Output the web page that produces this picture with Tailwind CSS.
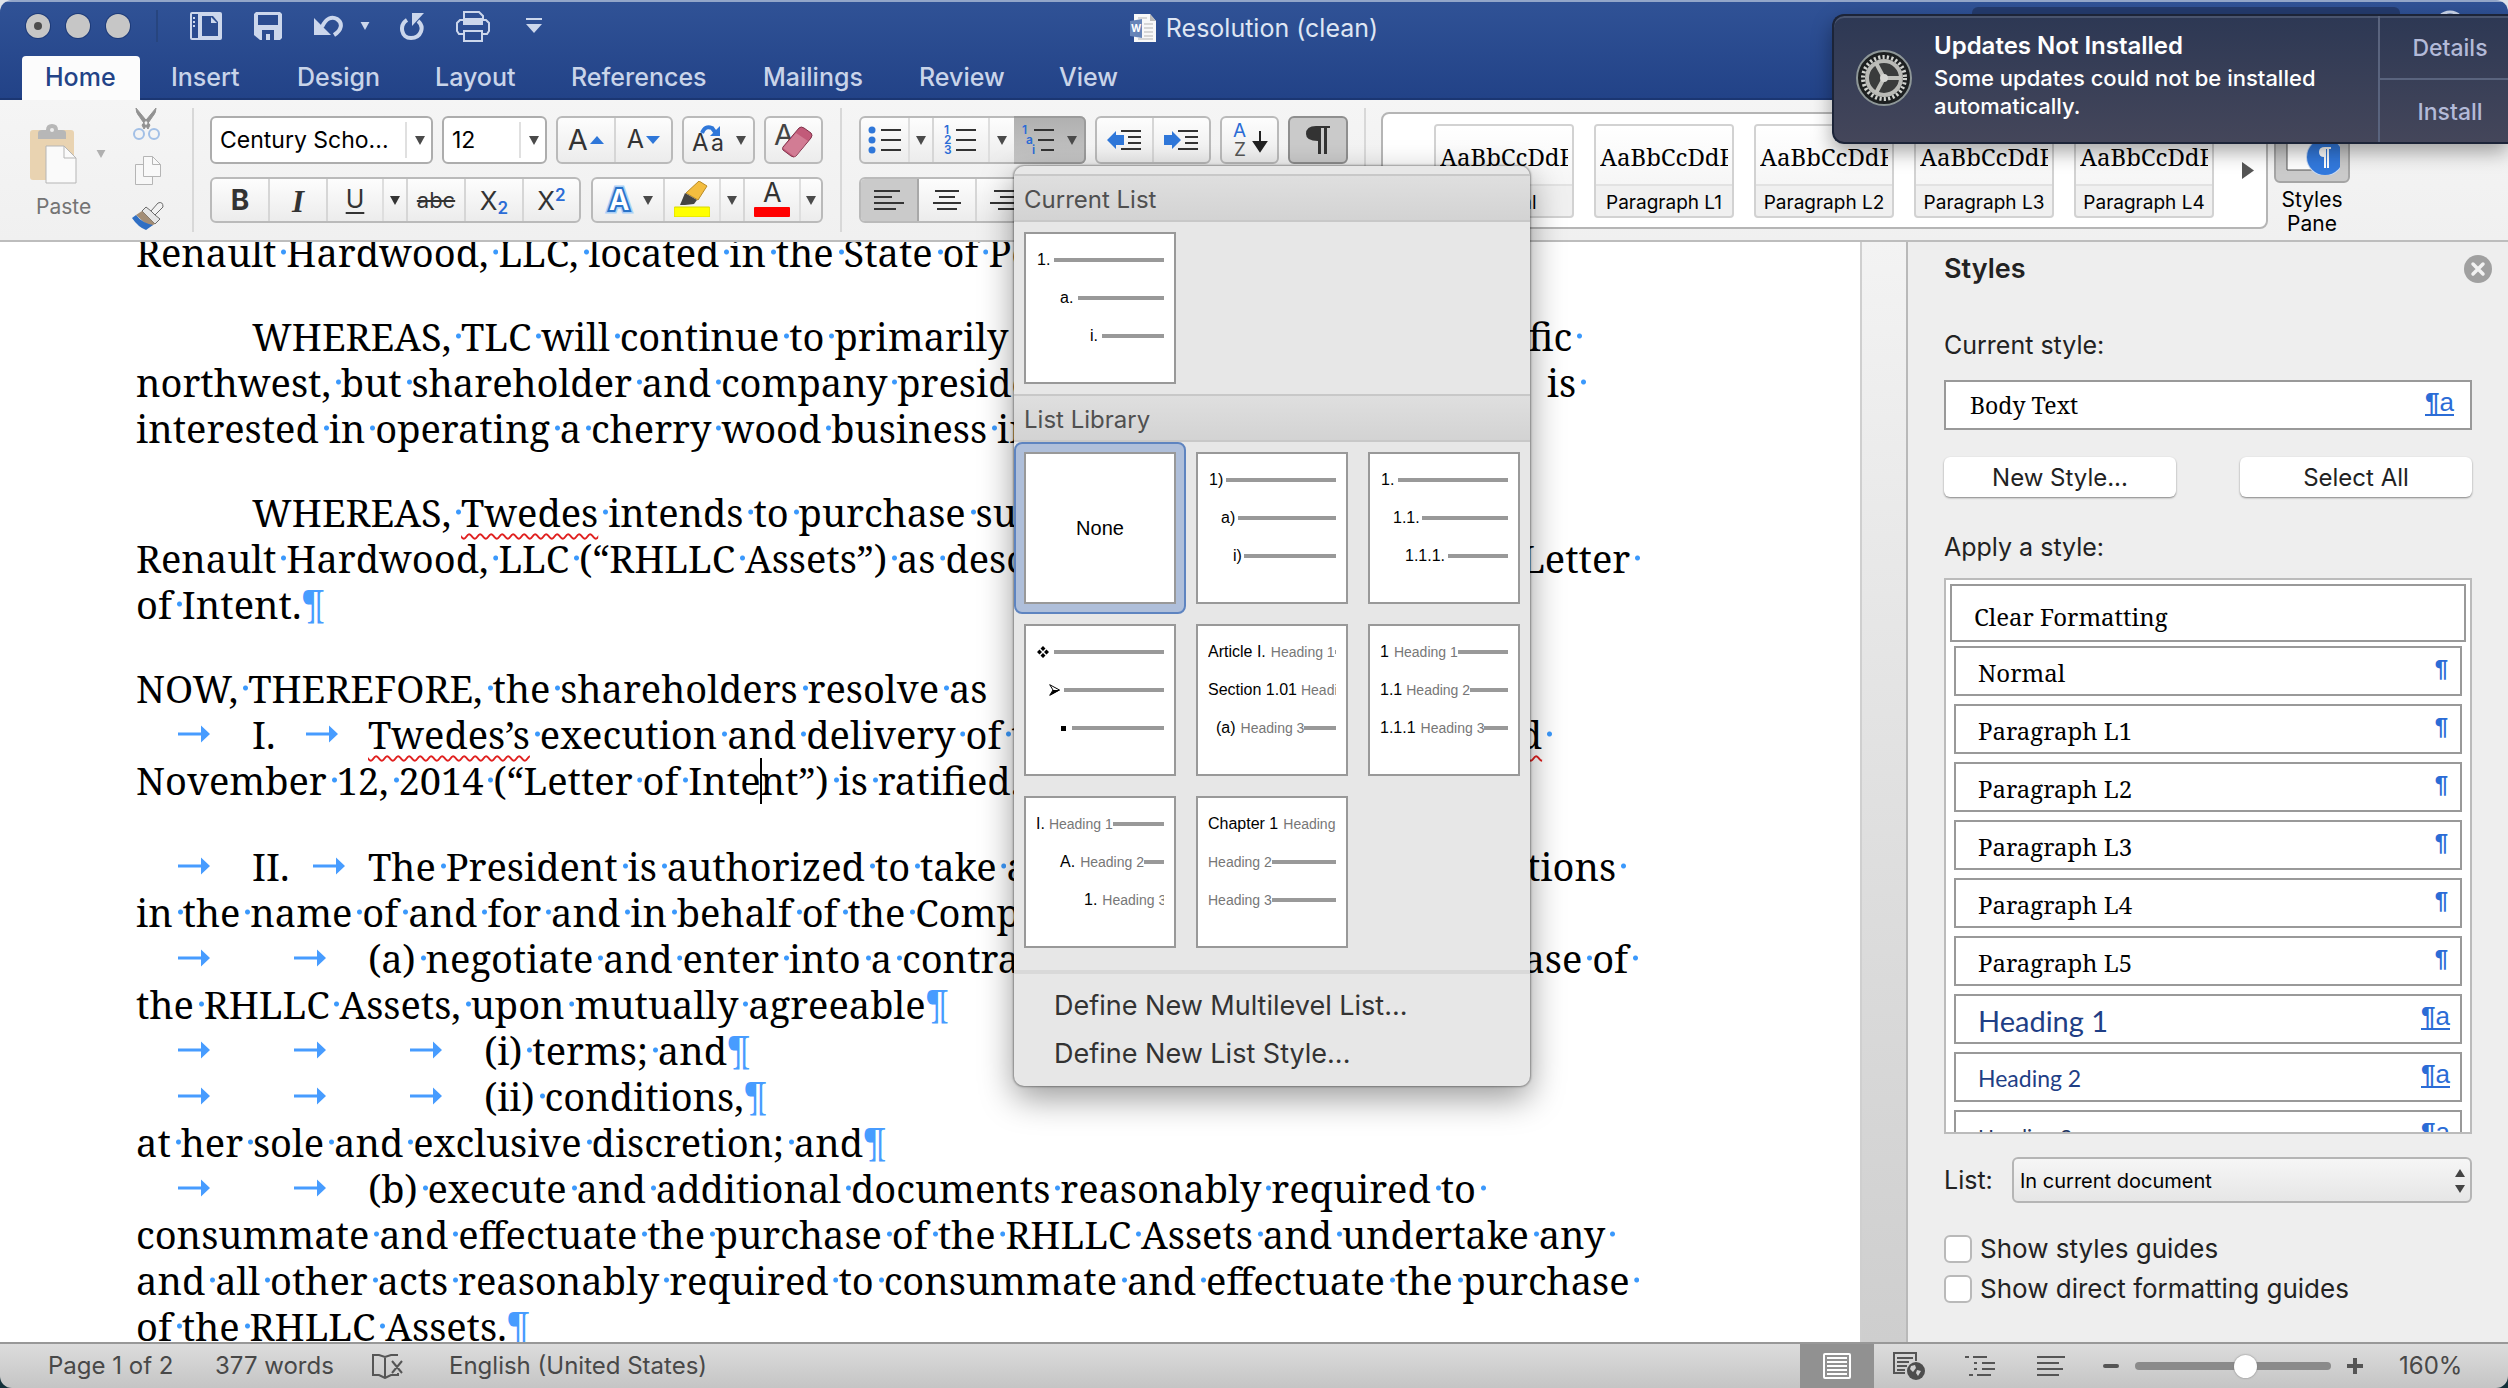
<!DOCTYPE html>
<html lang="en">
<head>
<meta charset="utf-8">
<title>Resolution (clean)</title>
<script src="https://cdn.jsdelivr.net/npm/@tailwindcss/browser@4"></script>
</head>
<body class="bg-linear-to-b from-[#dfe3ea] to-[#12303a] font-[Inter,'Liberation_Sans',sans-serif] text-black">
<svg class="hidden" aria-hidden="true">
  <symbol id="caret" viewBox="0 0 10 9"><path d="M0 0h10L5 9z" fill="currentColor"/></symbol>
  <symbol id="tab" viewBox="0 0 32 18"><path d="M0 7.500h23V0.500L32 9l-9 8.500v-7H0z" fill="#479cff"/></symbol>
</svg>
<div class="relative flex h-screen flex-col overflow-hidden rounded-[12px]">

<!-- Title bar and ribbon tabs -->
<header class="flex h-[100px] shrink-0 flex-col justify-between border-t-2 border-[#93a6c9] bg-linear-to-b from-[#305296] to-[#224287] shadow-[inset_0_-2px_0_#1b3672]">
  <div class="grid grid-cols-[1fr_auto_1fr] items-start">
    <div class="flex items-center pt-2 pl-[26px] text-[#ccd7ec]">
      <button aria-label="Close" class="mr-4 flex size-6 items-center justify-center rounded-full bg-[#c6c6c6] ring-1 ring-[#1d3a78]"><span class="size-2 rounded-full bg-[#4c4c4c]"></span></button>
      <button aria-label="Minimize" class="mr-4 size-6 rounded-full bg-[#c6c6c6] ring-1 ring-[#1d3a78]"></button>
      <button aria-label="Zoom" class="size-6 rounded-full bg-[#c6c6c6] ring-1 ring-[#1d3a78]"></button>
      <span class="ml-[26px] h-8 w-[2px] bg-[#27457f]"></span>
      <button aria-label="Templates" class="ml-8"><svg width="32" height="28" viewBox="0 0 32 28"><rect width="32" height="28" rx="2" fill="currentColor"/><rect x="2" y="2" width="6" height="24" fill="#2b4c90"/><path d="M3 5h2v2H3zM3 9h2v2H3zM3 13h2v2H3z" fill="#ccd7ec"/><path d="M12 4h11l5 6v14H12z" fill="#2b4c90"/><path d="M21 5v6h6z" fill="#ccd7ec"/></svg></button>
      <button aria-label="Save" class="ml-8"><svg width="28" height="28" viewBox="0 0 28 28"><path d="M2 0h24l2 2v24l-2 2H6l-6-5V2z" fill="currentColor"/><path d="M4 3h20v10H4zM8 18h12v10h-4v-6h-4v6H8z" fill="#2b4c90"/></svg></button>
      <button aria-label="Undo" class="ml-8"><svg width="30" height="22" viewBox="0 0 30 22"><path d="M0 3v17h17z" fill="currentColor"/><path d="M8 12c4-9 10-11 15-8 6 4 5 11-3 16" fill="none" stroke="currentColor" stroke-width="4"/></svg></button>
      <button aria-label="Undo options" class="ml-4"><svg width="10" height="8"><use href="#caret"/></svg></button>
      <button aria-label="Repeat" class="ml-[30px]"><svg width="24" height="28" viewBox="0 0 24 28"><path d="M7 8C-1 13 1 26 11 26c10 0 14-11 7-17" fill="none" stroke="currentColor" stroke-width="4"/><path d="M12 1h12L12 14z" fill="currentColor"/></svg></button>
      <button aria-label="Print" class="ml-8"><svg width="34" height="32" viewBox="0 0 34 32"><path d="M8 10V2h15l4 4v4M7 24H3l-2-3v-8l3-3h26l3 3v8l-2 3h-4" fill="none" stroke="currentColor" stroke-width="2"/><path d="M7 8h20v7H7z" fill="currentColor"/><path d="M8 21h18v10H8z" fill="none" stroke="currentColor" stroke-width="2"/></svg></button>
      <button aria-label="Customize toolbar" class="ml-9"><svg width="16" height="16" viewBox="0 0 16 16"><path d="M0 0h16v2H0zM0 6h16l-8 9z" fill="currentColor"/></svg></button>
    </div>
    <h1 class="flex items-center gap-[10px] pt-[9px] text-[25px] leading-[34px] text-[#dfe6f3]">
      <svg width="26" height="28" viewBox="0 0 26 28"><path d="M4 0h16l6 7v21H4z" fill="#f8f8f8"/><path d="M20 0v7h6z" fill="#bbb"/><path d="M8 4h9M14 10h9M14 14h9M14 18h9M14 22h9M8 25h15" stroke="#b5b5b5"/><path d="M0 7l12-2v19L0 22z" fill="#6684b8"/><text x="1" y="18" font-size="10" font-weight="700" fill="#fff">W</text></svg>
      Resolution (clean)
    </h1>
    <div class="flex items-start justify-end gap-[34px] pt-[5px] pr-[42px]">
      <label class="block w-[428px]"><input aria-label="Search" type="search" class="h-10 w-full rounded-[6px] bg-[#243b6d]"></label>
      <svg class="mt-[3px]" width="32" height="32" viewBox="0 0 32 32"><circle cx="16" cy="16" r="14" fill="none" stroke="#ccd7ec" stroke-width="3"/></svg>
    </div>
  </div>
  <nav class="flex pl-[22px] text-[25px] font-medium leading-[38px] text-[#c9d4e9]">
    <a href="#" class="h-11 w-[118px] rounded-t-[4px] bg-[#fcfcfc] pt-[2px] pl-[23px] text-[#234387]">Home</a>
    <a href="#" class="w-[126px] pt-[2px] pl-[31px]">Insert</a>
    <a href="#" class="w-[138px] pt-[2px] pl-[31px]">Design</a>
    <a href="#" class="w-[136px] pt-[2px] pl-[31px]">Layout</a>
    <a href="#" class="w-[192px] pt-[2px] pl-[31px]">References</a>
    <a href="#" class="w-[156px] pt-[2px] pl-[31px]">Mailings</a>
    <a href="#" class="w-[140px] pt-[2px] pl-[31px]">Review</a>
    <a href="#" class="pt-[2px] pl-[31px]">View</a>
  </nav>
</header>

<!-- Ribbon -->
<section aria-label="Ribbon" class="relative z-10 flex h-[142px] shrink-0 border-b-2 border-[#bdbdbd] bg-linear-to-b from-[#f5f5f5] to-[#f0f0f0] py-2 text-[#4a4a4a]">
  <div class="flex w-[194px] shrink-0 border-r-2 border-[#d8d8d8] pl-[30px]">
    <button class="w-[78px] pt-[6px] text-left text-[21px] text-[#747474]">
      <span class="flex items-center gap-[19px]">
        <svg width="47" height="60" viewBox="0 0 47 60"><rect y="6" width="44" height="50" rx="3" fill="#e9d3b1"/><path d="M8 15V9q0-3 4-3h4q0-6 6-6t6 6h4q4 0 4 3v6z" fill="#b7b7b7"/><circle cx="22" cy="6" r="2" fill="#eee"/><path d="M16 22h18l12 12v25H16z" fill="#fafafa" stroke="#b5b5b5"/><path d="M34 22v12h12" fill="none" stroke="#b5b5b5"/></svg>
        <svg class="shrink-0 text-[#b0b0b0]" width="10" height="8"><use href="#caret"/></svg>
      </span>
      <span class="block pt-2 pl-[6px] leading-[30px]">Paste</span>
    </button>
    <div class="ml-6 flex flex-col justify-between pb-[2px]">
      <button aria-label="Cut"><svg width="32" height="32" viewBox="0 0 32 32"><path d="M4 0q0 5 3 8l9 13 2-4zM24 0q0 5-3 8l-9 13-2-4z" fill="#929292" stroke="#929292"/><circle cx="7" cy="26" r="5" fill="none" stroke="#a3c0e6" stroke-width="2"/><circle cx="22" cy="26" r="5" fill="none" stroke="#a3c0e6" stroke-width="2"/></svg></button>
      <button aria-label="Copy"><svg width="32" height="30" viewBox="0 0 32 30"><path d="M3.500 8.500h17v20h-17z" fill="#f7f7f7" stroke="#b5b5b5"/><path d="M11.500.5h9l8 8v12h-17z" fill="#f9f9f9" stroke="#b5b5b5"/><path d="M20.500.5v8h8" fill="none" stroke="#b5b5b5"/></svg></button>
      <button aria-label="Format painter"><svg width="32" height="28" viewBox="0 0 32 28"><path d="M19 9l7-8q5-2 5 4l-8 8z" fill="#f2f2f2" stroke="#6b6b6b"/><path d="M14 5l5 4 4 4 5 4-5 5L10 9z" fill="#e6e6e6" stroke="#6b6b6b"/><path d="M10 9l13 13-6 3L4 13z" fill="#a38d75"/><path d="M4 13q6 8 17 10l-7 5Q6 25 0 16z" fill="#2f6fc4"/></svg></button>
    </div>
  </div>

  <!-- Font controls -->
  <div class="flex w-[648px] shrink-0 flex-col gap-[13px] border-r-2 border-[#d8d8d8] pt-2 pl-4">
    <div class="flex gap-[9px]">
      <div class="relative h-12 w-[223px]">
        <select aria-label="Font" class="size-full appearance-none rounded-[6px] border-2 border-[#adadad] bg-white pl-2 text-[23px] text-black"><option>Century Scho...</option></select>
        <span class="pointer-events-none absolute inset-y-[6px] right-0 flex w-7 items-center justify-center border-l-2 border-[#e0e0e0]"><svg width="10" height="9"><use href="#caret"/></svg></span>
      </div>
      <div class="relative h-12 w-[105px]">
        <select aria-label="Font size" class="size-full appearance-none rounded-[6px] border-2 border-[#adadad] bg-white pl-2 text-[23px] text-black"><option>12</option></select>
        <span class="pointer-events-none absolute inset-y-[6px] right-0 flex w-7 items-center justify-center border-l-2 border-[#e0e0e0]"><svg width="10" height="9"><use href="#caret"/></svg></span>
      </div>
      <div class="flex h-12 w-[117px] overflow-hidden rounded-[6px] border-2 border-[#bababa] bg-linear-to-b from-[#fdfdfd] to-[#ececec]">
        <button class="flex flex-1 items-center justify-center gap-[2px] border-r-2 border-[#d6d6d6] text-[29px] text-[#333]">A<svg width="14" height="8" viewBox="0 0 14 8"><path d="M7 0l7 8H0z" fill="#2f77d9"/></svg></button>
        <button class="flex flex-1 items-center justify-center gap-[2px] text-[25px] text-[#333]">A<svg width="14" height="8" viewBox="0 0 14 8"><path d="M0 0h14L7 8z" fill="#2f77d9"/></svg></button>
      </div>
      <button aria-label="Change case" class="flex h-12 w-[73px] items-center justify-center gap-[10px] rounded-[6px] border-2 border-[#bababa] bg-linear-to-b from-[#fdfdfd] to-[#ececec]">
        <svg width="34" height="32" viewBox="0 0 34 32"><text x="0" y="27" font-size="24" fill="#333">A</text><text x="19" y="27" font-size="23" fill="#333">a</text><path d="M10 9Q13 1 20 4l3 4" fill="none" stroke="#2f77d9" stroke-width="4"/><path d="M28 2v10H18z" fill="#2f77d9"/></svg>
        <svg width="10" height="9"><use href="#caret"/></svg>
      </button>
      <button aria-label="Clear formatting" class="flex h-12 w-[59px] items-center justify-center rounded-[6px] border-2 border-[#bababa] bg-linear-to-b from-[#fdfdfd] to-[#ececec]">
        <svg width="42" height="40" viewBox="0 0 42 40"><text x="1" y="25" font-size="29" fill="#444">A</text><path d="M10 27L26 8q2-2 5 0l7 5q2 2 0 5L23 36q-2 2-5 0l-8-6q-1-1 0-3z" fill="#c25a79" stroke="#7f3149"/><path d="M10 28l12 9L35 21l-12-8z" fill="#d98aa0" opacity=".7"/></svg>
      </button>
    </div>
    <div class="flex gap-[10px]">
      <div class="flex h-[46px] w-[371px] overflow-hidden rounded-[6px] border-2 border-[#bababa] bg-linear-to-b from-[#fdfdfd] to-[#ececec] text-[#333]">
        <button class="w-[58px] border-r-2 border-[#d6d6d6] text-[28px] font-bold">B</button>
        <button class="w-[58px] border-r-2 border-[#d6d6d6] font-['Liberation_Serif',serif] text-[31px] font-bold italic">I</button>
        <button class="w-[56px] border-r-2 border-[#dedede] text-[25px] underline decoration-2 underline-offset-4">U</button>
        <button aria-label="Underline options" class="flex w-6 items-center justify-center border-r-2 border-[#d6d6d6]"><svg width="10" height="9"><use href="#caret"/></svg></button>
        <button class="w-[58px] border-r-2 border-[#d6d6d6] text-[22px] line-through">abc</button>
        <button class="w-[58px] border-r-2 border-[#d6d6d6] text-[26px]">X<sub class="text-[17px] font-semibold text-[#2b6cd6]">2</sub></button>
        <button class="flex-1 text-[26px]">X<sup class="text-[17px] font-semibold text-[#2b6cd6]">2</sup></button>
      </div>
      <div class="flex h-[46px] w-[232px] overflow-hidden rounded-[6px] border-2 border-[#bababa] bg-linear-to-b from-[#fdfdfd] to-[#ececec]">
        <button aria-label="Text effects" class="flex w-[72px] items-center justify-center gap-2 border-r-2 border-[#d6d6d6]">
          <svg width="32" height="34" viewBox="0 0 32 34"><text x="6" y="27" font-size="28" font-weight="600" fill="#fff" stroke="#a9cff7" stroke-width="7" paint-order="stroke">A</text><text x="6" y="27" font-size="28" font-weight="600" fill="#fff" stroke="#2a73c9" stroke-width="4" paint-order="stroke">A</text></svg>
          <svg width="10" height="9"><use href="#caret"/></svg></button>
        <button aria-label="Highlight" class="flex w-[56px] items-end justify-center border-r-2 border-[#dedede] pb-1"><svg width="36" height="36" viewBox="0 0 36 36"><path d="M12 12L25 0l8 5-9 14z" fill="#f3bd3f" stroke="#b98a25"/><path d="M11 12l12 7-3 4-9 1-5 0z" fill="#444"/><rect y="26" width="36" height="10" rx="1" fill="#ff0" stroke="#d8d800"/></svg></button>
        <button aria-label="Highlight options" class="flex w-6 items-center justify-center border-r-2 border-[#d6d6d6]"><svg width="10" height="9"><use href="#caret"/></svg></button>
        <button aria-label="Font color" class="flex w-[56px] items-end justify-center border-r-2 border-[#dedede] pb-1"><svg width="36" height="36" viewBox="0 0 36 36"><text x="9" y="21" font-size="27" fill="#333">A</text><rect y="26" width="36" height="10" rx="1" fill="#f00"/></svg></button>
        <button aria-label="Font color options" class="flex flex-1 items-center justify-center"><svg width="10" height="9"><use href="#caret"/></svg></button>
      </div>
    </div>
  </div>

  <!-- Paragraph controls -->
  <div class="flex w-[524px] shrink-0 flex-col gap-[13px] border-r-2 border-[#d8d8d8] pt-2 pl-[17px]">
    <div class="flex gap-[9px]">
      <div class="flex h-12 w-[227px] rounded-[6px] border-2 border-[#bababa] bg-linear-to-b from-[#fdfdfd] to-[#ececec]">
        <button aria-label="Bullets" class="flex w-[49px] items-center justify-center border-r-2 border-[#dedede]"><svg width="34" height="28" viewBox="0 0 34 28"><g fill="#2f77d9"><circle cx="4" cy="4" r="3.500"/><circle cx="4" cy="14" r="3.500"/><circle cx="4" cy="24" r="3.500"/></g><path d="M13 4h20M13 14h20M13 24h20" stroke="#333" stroke-width="2"/></svg></button>
        <button aria-label="Bullet options" class="flex w-6 items-center justify-center border-r-2 border-[#d6d6d6]"><svg width="10" height="9"><use href="#caret"/></svg></button>
        <button aria-label="Numbering" class="flex w-[56px] items-center justify-center border-r-2 border-[#dedede]"><svg width="34" height="32" viewBox="0 0 34 32"><g fill="#2b6cd6" font-size="12" font-weight="600"><text x="0" y="10">1</text><text x="0" y="20">2</text><text x="0" y="30">3</text></g><path d="M12 6h20M12 16h20M12 26h20" stroke="#333" stroke-width="2"/></svg></button>
        <button aria-label="Numbering options" class="flex w-6 items-center justify-center"><svg width="10" height="9"><use href="#caret"/></svg></button>
        <div class="relative -my-[2px] -mr-[2px] flex-1">
          <button aria-label="Multilevel list" aria-expanded="true" class="flex size-full items-center justify-center gap-3 rounded-r-[6px] border-2 border-l-0 border-[#9b9b9b] bg-linear-to-b from-[#b0b0b0] to-[#c6c6c6]"><svg width="33" height="32" viewBox="0 0 33 32"><g fill="#2b6cd6" font-size="12" font-weight="600"><text x="0" y="10">1</text><text x="4" y="20">a</text><text x="10" y="30">i</text></g><path d="M12 6h20M16 16h16M19 26h13" stroke="#333" stroke-width="2"/></svg><svg width="10" height="9"><use href="#caret"/></svg></button>

          <!-- Multilevel list menu -->
          <div class="absolute top-[50px] left-0 w-[516px] rounded-[10px] bg-[#e7e7e7] pt-2 pb-2 font-['Liberation_Sans',sans-serif] text-[16px] text-black shadow-[0_0_2px_1px_rgba(0,0,0,0.35),0_12px_34px_rgba(0,0,0,0.4)]">
            <h2 class="h-12 border-y-2 border-[#c8c8c8] bg-linear-to-b from-[#dfdfdf] to-[#d3d3d3] pt-[2px] pl-[10px] font-[Inter,sans-serif] text-[24px] leading-[44px] text-[#505050]">Current List</h2>
            <div class="px-[10px] py-[10px]">
              <button class="block size-[152px] border-2 border-[#999] bg-white pt-[7px] pr-[10px] pb-[27px] pl-[11px] text-left *:flex *:h-[38px] *:items-center *:overflow-hidden *:whitespace-nowrap">
                <span><span class="w-[17px]">1.</span><i class="h-1 flex-1 bg-[#999]"></i></span>
                <span class="pl-[23px]"><span class="w-[18px]">a.</span><i class="h-1 flex-1 bg-[#999]"></i></span>
                <span class="pl-[53px]"><span class="w-[12px]">i.</span><i class="h-1 flex-1 bg-[#999]"></i></span>
              </button>
            </div>
            <h2 class="h-12 border-y-2 border-[#c8c8c8] bg-linear-to-b from-[#dfdfdf] to-[#d3d3d3] pt-[2px] pl-[10px] font-[Inter,sans-serif] text-[24px] leading-[44px] text-[#505050]">List Library</h2>
            <div class="grid auto-rows-[172px] grid-cols-[172px_172px_172px] border-b-4 border-[#d9d9d9] pb-3">
              <div class="rounded-[8px] border-2 border-[#5e84c0] bg-[#afbfda] p-2"><button class="size-[152px] border-2 border-[#999] bg-white text-[20px]">None</button></div>
              <div class="p-[10px]"><button class="block size-[152px] border-2 border-[#999] bg-white pt-[7px] pr-[10px] pb-[27px] pl-[11px] text-left *:flex *:h-[38px] *:items-center *:overflow-hidden *:whitespace-nowrap">
                <span><span class="w-[17px]">1)</span><i class="h-1 flex-1 bg-[#999]"></i></span>
                <span class="pl-3"><span class="w-[17px]">a)</span><i class="h-1 flex-1 bg-[#999]"></i></span>
                <span class="pl-6"><span class="w-[11px]">i)</span><i class="h-1 flex-1 bg-[#999]"></i></span></button></div>
              <div class="p-[10px]"><button class="block size-[152px] border-2 border-[#999] bg-white pt-[7px] pr-[10px] pb-[27px] pl-[11px] text-left *:flex *:h-[38px] *:items-center *:overflow-hidden *:whitespace-nowrap">
                <span><span class="w-[17px]">1.</span><i class="h-1 flex-1 bg-[#999]"></i></span>
                <span class="pl-3"><span class="w-[29px]">1.1.</span><i class="h-1 flex-1 bg-[#999]"></i></span>
                <span class="pl-6"><span class="w-[43px]">1.1.1.</span><i class="h-1 flex-1 bg-[#999]"></i></span></button></div>
              <div class="p-[10px]"><button class="block size-[152px] border-2 border-[#999] bg-white pt-[7px] pr-[10px] pb-[27px] pl-[11px] text-left *:flex *:h-[38px] *:items-center *:overflow-hidden *:whitespace-nowrap">
                <span><svg class="mr-[5px]" width="12" height="12" viewBox="0 0 12 12"><path d="M6 0l2.500 2.500L6 5 3.500 2.500zM6 7l2.500 2.500L6 12 3.500 9.500zM2.500 3.500L5 6 2.500 8.500 0 6zM9.500 3.500L12 6 9.500 8.500 7 6z"/></svg><i class="h-1 flex-1 bg-[#999]"></i></span>
                <span class="pl-3"><svg class="mr-1" width="11" height="12" viewBox="0 0 11 12"><path d="M.7.7L10.500 6 .7 11.300 4 6z" fill="#fff" stroke="#000"/><path d="M4 6h7L1 11.500z"/></svg><i class="h-1 flex-1 bg-[#999]"></i></span>
                <span class="pl-6"><svg class="mr-[6px]" width="5" height="5"><path d="M0 0h5v5H0z"/></svg><i class="h-1 flex-1 bg-[#999]"></i></span></button></div>
              <div class="p-[10px]"><button class="block size-[152px] border-2 border-[#999] bg-white pt-[7px] pr-[10px] pb-[27px] pl-[10px] text-left *:flex *:h-[38px] *:items-center *:overflow-hidden *:whitespace-nowrap">
                <span>Article I.<span class="ml-[5px] text-[14px] text-[#777]">Heading 1</span><i class="h-1 flex-1 bg-[#999]"></i></span>
                <span>Section 1.01<span class="ml-1 text-[14px] text-[#777]">Heading 2</span></span>
                <span class="pl-2">(a)<span class="ml-[5px] text-[14px] text-[#777]">Heading 3</span><i class="h-1 flex-1 bg-[#999]"></i></span></button></div>
              <div class="p-[10px]"><button class="block size-[152px] border-2 border-[#999] bg-white pt-[7px] pr-[10px] pb-[27px] pl-[10px] text-left *:flex *:h-[38px] *:items-center *:overflow-hidden *:whitespace-nowrap">
                <span>1<span class="ml-[5px] text-[14px] text-[#777]">Heading 1</span><i class="h-1 flex-1 bg-[#999]"></i></span>
                <span>1.1<span class="ml-1 text-[14px] text-[#777]">Heading 2</span><i class="h-1 flex-1 bg-[#999]"></i></span>
                <span>1.1.1<span class="ml-[5px] text-[14px] text-[#777]">Heading 3</span><i class="h-1 flex-1 bg-[#999]"></i></span></button></div>
              <div class="p-[10px]"><button class="block size-[152px] border-2 border-[#999] bg-white pt-[7px] pr-[10px] pb-[27px] pl-[10px] text-left *:flex *:h-[38px] *:items-center *:overflow-hidden *:whitespace-nowrap">
                <span>I.<span class="ml-1 text-[14px] text-[#777]">Heading 1</span><i class="h-1 flex-1 bg-[#999]"></i></span>
                <span class="pl-6">A.<span class="ml-[5px] text-[14px] text-[#777]">Heading 2</span><i class="h-1 flex-1 bg-[#999]"></i></span>
                <span class="pl-12">1.<span class="ml-[5px] text-[14px] text-[#777]">Heading 3</span></span></button></div>
              <div class="p-[10px]"><button class="block size-[152px] border-2 border-[#999] bg-white pt-[7px] pr-[10px] pb-[27px] pl-[10px] text-left *:flex *:h-[38px] *:items-center *:overflow-hidden *:whitespace-nowrap">
                <span>Chapter 1<span class="ml-[5px] text-[14px] text-[#777]">Heading</span></span>
                <span><span class="text-[14px] text-[#777]">Heading 2</span><i class="h-1 flex-1 bg-[#999]"></i></span>
                <span><span class="text-[14px] text-[#777]">Heading 3</span><i class="h-1 flex-1 bg-[#999]"></i></span></button></div>
            </div>
            <div class="pt-2 pl-10 font-[Inter,sans-serif] text-[27px] leading-[48px] text-[#333]">
              <button class="block">Define New Multilevel List...</button>
              <button class="block">Define New List Style...</button>
            </div>
          </div>
        </div>
      </div>
      <div class="flex h-12 w-[116px] rounded-[6px] border-2 border-[#bababa] bg-linear-to-b from-[#fdfdfd] to-[#ececec]">
        <button aria-label="Decrease indent" class="flex flex-1 items-center justify-center border-r-2 border-[#d6d6d6]"><svg width="36" height="24" viewBox="0 0 36 24"><path d="M0 12L9 3v4h8v10H9v4z" fill="#2f77d9"/><path d="M14 3h20M21 9h13M21 15h13M14 21h20" stroke="#333" stroke-width="2"/></svg></button>
        <button aria-label="Increase indent" class="flex flex-1 items-center justify-center"><svg width="36" height="24" viewBox="0 0 36 24"><path d="M17 12L8 3v4H0v10h8v4z" fill="#2f77d9"/><path d="M14 3h20M21 9h13M21 15h13M14 21h20" stroke="#333" stroke-width="2"/></svg></button>
      </div>
      <button aria-label="Sort" class="flex h-12 w-[59px] items-center justify-center rounded-[6px] border-2 border-[#bababa] bg-linear-to-b from-[#fdfdfd] to-[#ececec]"><svg width="36" height="36" viewBox="0 0 36 36"><text x="1" y="15" font-size="19" fill="#2b6cd6">A</text><text x="2" y="34" font-size="19" fill="#555">Z</text><path d="M28 9v12M22 20h12l-6 9z" stroke="#222" stroke-width="2" fill="#222"/></svg></button>
      <button aria-label="Show paragraph marks" aria-pressed="true" class="flex h-12 w-[60px] items-center justify-center rounded-[6px] border-2 border-[#8f8f8f] bg-[#cacaca]"><svg width="24" height="28" viewBox="0 0 24 28"><path d="M10 0h14v2h-3v26h-3V2h-3v26h-3V15Q0 15 0 8q0-8 10-8z" fill="#333"/></svg></button>
    </div>
    <div class="flex h-[46px] w-[340px] overflow-hidden rounded-[6px] border-2 border-[#bababa] bg-linear-to-b from-[#fdfdfd] to-[#ececec]">
      <button aria-label="Align left" class="flex w-[58px] items-center justify-center border-r-2 border-[#a8a8a8] bg-[#cacaca]"><svg width="30" height="22" viewBox="0 0 30 22"><path d="M0 2h26M0 8h18M0 14h30M0 20h22" stroke="#333" stroke-width="2"/></svg></button>
      <button aria-label="Align center" class="flex w-[58px] items-center justify-center border-r-2 border-[#d6d6d6]"><svg width="28" height="22" viewBox="0 0 28 22"><path d="M2 2h24M6 8h16M0 14h28M4 20h20" stroke="#333" stroke-width="2"/></svg></button>
      <button aria-label="Align right" class="flex w-[58px] items-center justify-center border-r-2 border-[#d6d6d6]"><svg width="30" height="22" viewBox="0 0 30 22"><path d="M4 2h26M10 8h20M0 14h30M8 20h22" stroke="#333" stroke-width="2"/></svg></button>
    </div>
  </div>

  <!-- Style gallery -->
  <div class="mt-1 ml-[15px] flex h-[117px] min-w-0 flex-1 items-center gap-5 overflow-hidden rounded-[8px] border-2 border-[#b5b5b5] bg-white pl-[51px] text-[19px] text-black">
    <button class="flex h-[94px] w-[140px] shrink-0 flex-col overflow-hidden rounded-[4px] border-2 border-[#d2d2d2] bg-[#f0f0f0]"><span class="flex h-[60px] w-full border-b-2 border-[#e2e2e2] bg-linear-to-b from-white to-[#f6f6f6] px-1"><span class="w-full overflow-hidden text-left font-['Noto_Serif','Liberation_Serif',serif] text-[24px] leading-[62px]">AaBbCcDdEe</span></span><span class="w-full leading-[34px]">Normal</span></button>
    <button class="flex h-[94px] w-[140px] shrink-0 flex-col overflow-hidden rounded-[4px] border-2 border-[#d2d2d2] bg-[#f0f0f0]"><span class="flex h-[60px] w-full border-b-2 border-[#e2e2e2] bg-linear-to-b from-white to-[#f6f6f6] px-1"><span class="w-full overflow-hidden text-left font-['Noto_Serif','Liberation_Serif',serif] text-[24px] leading-[62px]">AaBbCcDdEe</span></span><span class="w-full leading-[34px]">Paragraph L1</span></button>
    <button class="flex h-[94px] w-[140px] shrink-0 flex-col overflow-hidden rounded-[4px] border-2 border-[#d2d2d2] bg-[#f0f0f0]"><span class="flex h-[60px] w-full border-b-2 border-[#e2e2e2] bg-linear-to-b from-white to-[#f6f6f6] px-1"><span class="w-full overflow-hidden text-left font-['Noto_Serif','Liberation_Serif',serif] text-[24px] leading-[62px]">AaBbCcDdEe</span></span><span class="w-full leading-[34px]">Paragraph L2</span></button>
    <button class="flex h-[94px] w-[140px] shrink-0 flex-col overflow-hidden rounded-[4px] border-2 border-[#d2d2d2] bg-[#f0f0f0]"><span class="flex h-[60px] w-full border-b-2 border-[#e2e2e2] bg-linear-to-b from-white to-[#f6f6f6] px-1"><span class="w-full overflow-hidden text-left font-['Noto_Serif','Liberation_Serif',serif] text-[24px] leading-[62px]">AaBbCcDdEe</span></span><span class="w-full leading-[34px]">Paragraph L3</span></button>
    <button class="flex h-[94px] w-[140px] shrink-0 flex-col overflow-hidden rounded-[4px] border-2 border-[#d2d2d2] bg-[#f0f0f0]"><span class="flex h-[60px] w-full border-b-2 border-[#e2e2e2] bg-linear-to-b from-white to-[#f6f6f6] px-1"><span class="w-full overflow-hidden text-left font-['Noto_Serif','Liberation_Serif',serif] text-[24px] leading-[62px]">AaBbCcDdEe</span></span><span class="w-full leading-[34px]">Paragraph L4</span></button>
    <button aria-label="More styles" class="ml-2"><svg width="12" height="17" viewBox="0 0 12 17"><path d="M0 0l12 8.500L0 17z" fill="#555"/></svg></button>
  </div>
  <button class="mr-[158px] ml-[6px] flex w-[76px] shrink-0 flex-col items-center text-[21px] leading-6 text-black">
    <span class="flex h-[75px] w-full shrink-0 items-end justify-center rounded-[6px] border-2 border-[#a5a5a5] bg-[#cacaca] pb-[6px]"><svg width="56" height="46" viewBox="0 0 56 46"><path d="M3 1h38v40H3z" fill="#fff" stroke="#555"/><circle cx="41" cy="28" r="19" fill="#c9dbf5"/><circle cx="41" cy="28" r="18" fill="#3279dd"/><path d="M41 18h6v2h-2v19h-2V20h-1v19h-2V28q-5 0-5-5t6-5z" fill="#fff"/></svg></span>
    <span class="pt-[5px]">Styles<br>Pane</span>
  </button>
</section>

<!-- Document and styles pane -->
<main class="flex min-h-0 flex-1">
  <article id="doc" class="min-w-0 flex-1 overflow-hidden bg-white pl-[136px] font-['Noto_Serif','Liberation_Serif',serif] text-[38px] leading-[46px] whitespace-nowrap">
    <p class="-mt-[13px]">Renault Hardwood, LLC, located in the State of Pennsylvania.</p>
    <div class="mt-[38px]">
      <p class="flex w-[1446px] justify-between pl-[116px]"><span>WHEREAS, TLC will continue to primarily</span><span>Pacific<b> </b></span></p>
      <p class="flex w-[1450px] justify-between"><span>northwest, but shareholder and company president</span><span>is<b> </b></span></p>
      <p>interested in operating a cherry wood business in</p>
    </div>
    <div class="mt-[38px]">
      <p class="pl-[116px]">WHEREAS, <u class="underline decoration-[#e0201f] decoration-wavy decoration-2 underline-offset-[6px] [text-decoration-skip-ink:none]">Twedes</u> intends to purchase such</p>
      <p class="flex w-[1504px] justify-between"><span>Renault Hardwood, LLC (“RHLLC Assets”) as described</span><span>Letter<b> </b></span></p>
      <p>of Intent.<span class="text-[#479cff]">¶</span></p>
    </div>
    <div class="mt-[38px]">
      <p>NOW, THEREFORE, the shareholders resolve as</p>
      <p class="flex w-[1416px]">
        <span class="flex w-[116px] items-center justify-center"><svg width="32" height="18"><use href="#tab"/></svg></span>
        <span class="flex w-[116px] items-center"><span>I.</span><span class="flex flex-1 justify-center"><svg width="32" height="18"><use href="#tab"/></svg></span></span>
        <span><u class="underline decoration-[#e0201f] decoration-wavy decoration-2 underline-offset-[6px] [text-decoration-skip-ink:none]">Twedes’s</u> execution and delivery of the</span>
        <span class="ml-auto"><u class="underline decoration-[#e0201f] decoration-wavy decoration-2 underline-offset-[6px] [text-decoration-skip-ink:none]">dated</u><b> </b></span></p>
      <p>November 12, 2014 (“Letter of Inte<span class="relative"><i class="absolute top-1 -left-px h-[46px] w-[2px] bg-black"></i></span>nt”) is ratified.</p>
    </div>
    <div class="mt-10">
      <p class="flex w-[1490px]">
        <span class="flex w-[116px] items-center justify-center"><svg width="32" height="18"><use href="#tab"/></svg></span>
        <span class="flex w-[116px] items-center"><span>II.</span><span class="flex flex-1 justify-center"><svg width="32" height="18"><use href="#tab"/></svg></span></span>
        <span>The President is authorized to take all</span><span class="ml-auto">actions<b> </b></span></p>
      <p>in the name of and for and in behalf of the Company</p>
      <p class="flex w-[1502px]">
        <span class="flex w-[116px] items-center justify-center"><svg width="32" height="18"><use href="#tab"/></svg></span>
        <span class="flex w-[116px] items-center justify-center"><svg width="32" height="18"><use href="#tab"/></svg></span>
        <span>(a) negotiate and enter into a contract</span><span class="ml-auto">purchase of<b> </b></span></p>
      <p>the RHLLC Assets, upon mutually agreeable<span class="text-[#479cff]">¶</span></p>
      <p class="flex">
        <span class="flex w-[116px] items-center justify-center"><svg width="32" height="18"><use href="#tab"/></svg></span>
        <span class="flex w-[116px] items-center justify-center"><svg width="32" height="18"><use href="#tab"/></svg></span>
        <span class="flex w-[116px] items-center justify-center"><svg width="32" height="18"><use href="#tab"/></svg></span>
        <span>(i) terms; and<span class="text-[#479cff]">¶</span></span></p>
      <p class="flex">
        <span class="flex w-[116px] items-center justify-center"><svg width="32" height="18"><use href="#tab"/></svg></span>
        <span class="flex w-[116px] items-center justify-center"><svg width="32" height="18"><use href="#tab"/></svg></span>
        <span class="flex w-[116px] items-center justify-center"><svg width="32" height="18"><use href="#tab"/></svg></span>
        <span>(ii) conditions,<span class="text-[#479cff]">¶</span></span></p>
      <p>at her sole and exclusive discretion; and<span class="text-[#479cff]">¶</span></p>
      <p class="flex">
        <span class="flex w-[116px] items-center justify-center"><svg width="32" height="18"><use href="#tab"/></svg></span>
        <span class="flex w-[116px] items-center justify-center"><svg width="32" height="18"><use href="#tab"/></svg></span>
        <span>(b) execute and additional documents reasonably required to<b> </b></span></p>
      <p>consummate and effectuate the purchase of the RHLLC Assets and undertake any<b> </b></p>
      <p>and all other acts reasonably required to consummate and effectuate the purchase<b> </b></p>
      <p>of the RHLLC Assets.<span class="text-[#479cff]">¶</span></p>
    </div>
  </article>
  <div class="w-12 shrink-0 border-r-2 border-l-2 border-r-[#b9b9b9] border-l-[#cfcfcf] bg-linear-to-b from-[#f3f3f3] to-[#cecece]"></div>

  <aside aria-label="Styles" class="w-[600px] shrink-0 bg-[#eee] pr-[36px] pl-[36px] text-[26px] text-[#222]">
    <div class="-mr-5 flex items-center justify-between pt-[7px]">
      <h2 class="text-[27px] leading-10 font-semibold">Styles</h2>
      <button aria-label="Close pane"><svg width="28" height="28" viewBox="0 0 28 28"><circle cx="14" cy="14" r="14" fill="#a0a0a0"/><path d="M9 9l10 10M19 9L9 19" stroke="#f2f2f2" stroke-width="3.500" stroke-linecap="round"/></svg></button>
    </div>
    <p class="pt-9 text-[25px] leading-10">Current style:</p>
    <div class="mt-[15px] flex h-[50px] items-center justify-between border-2 border-[#999] bg-white pr-4 pl-6 font-['Noto_Serif','Liberation_Serif',serif] text-[23px] text-black"><span>Body Text</span><span class="mb-1 border-b-2 border-[#2b6cd6] font-['Liberation_Sans',sans-serif] text-[26px] leading-6 text-[#2b6cd6]"><b>¶</b>a</span></div>
    <div class="flex justify-between pt-[27px] text-[24px]">
      <button class="h-10 w-[232px] rounded-[6px] bg-white pt-[2px] shadow-[0_1px_2px_rgba(0,0,0,0.45)]">New Style...</button>
      <button class="h-10 w-[232px] rounded-[6px] bg-white pt-[2px] shadow-[0_1px_2px_rgba(0,0,0,0.45)]">Select All</button>
    </div>
    <p class="pt-[30px] text-[25px] leading-10">Apply a style:</p>
    <div class="mt-[11px] h-[556px] overflow-hidden border-2 border-[#bbb] bg-white px-1 pt-1 font-['Noto_Serif','Liberation_Serif',serif] text-[24px] text-black">
      <button class="mb-1 block h-[58px] w-full border-2 border-[#999] pt-2 pl-[22px] text-left leading-10">Clear Formatting</button>
      <div class="flex flex-col gap-2 px-1">
        <button class="flex h-[50px] shrink-0 items-center justify-between border-2 border-[#999] pt-[3px] pr-3 pl-[22px]"><span>Normal</span><span class="pb-2 font-['Liberation_Sans',sans-serif] text-[24px] leading-7 font-bold text-[#2b6cd6]">¶</span></button>
        <button class="flex h-[50px] shrink-0 items-center justify-between border-2 border-[#999] pt-[3px] pr-3 pl-[22px]"><span>Paragraph L1</span><span class="pb-2 font-['Liberation_Sans',sans-serif] text-[24px] leading-7 font-bold text-[#2b6cd6]">¶</span></button>
        <button class="flex h-[50px] shrink-0 items-center justify-between border-2 border-[#999] pt-[3px] pr-3 pl-[22px]"><span>Paragraph L2</span><span class="pb-2 font-['Liberation_Sans',sans-serif] text-[24px] leading-7 font-bold text-[#2b6cd6]">¶</span></button>
        <button class="flex h-[50px] shrink-0 items-center justify-between border-2 border-[#999] pt-[3px] pr-3 pl-[22px]"><span>Paragraph L3</span><span class="pb-2 font-['Liberation_Sans',sans-serif] text-[24px] leading-7 font-bold text-[#2b6cd6]">¶</span></button>
        <button class="flex h-[50px] shrink-0 items-center justify-between border-2 border-[#999] pt-[3px] pr-3 pl-[22px]"><span>Paragraph L4</span><span class="pb-2 font-['Liberation_Sans',sans-serif] text-[24px] leading-7 font-bold text-[#2b6cd6]">¶</span></button>
        <button class="flex h-[50px] shrink-0 items-center justify-between border-2 border-[#999] pt-[3px] pr-3 pl-[22px]"><span>Paragraph L5</span><span class="pb-2 font-['Liberation_Sans',sans-serif] text-[24px] leading-7 font-bold text-[#2b6cd6]">¶</span></button>
        <button class="flex h-[50px] shrink-0 items-center justify-between border-2 border-[#999] pt-[3px] pr-[10px] pl-[22px]"><span class="font-[Lato,sans-serif] text-[29px] text-[#1f3f86]">Heading 1</span><span class="mb-2 border-b-2 border-[#2b6cd6] font-['Liberation_Sans',sans-serif] text-[26px] leading-6 text-[#2b6cd6]"><b>¶</b>a</span></button>
        <button class="flex h-[50px] shrink-0 items-center justify-between border-2 border-[#999] pt-[3px] pr-[10px] pl-[22px]"><span class="font-[Lato,sans-serif] text-[23px] text-[#1f3f86]">Heading 2</span><span class="mb-2 border-b-2 border-[#2b6cd6] font-['Liberation_Sans',sans-serif] text-[26px] leading-6 text-[#2b6cd6]"><b>¶</b>a</span></button>
        <button class="flex h-[50px] shrink-0 items-center justify-between border-2 border-[#999] pt-[3px] pr-[10px] pl-[22px]"><span class="font-[Lato,sans-serif] text-[21px] text-[#1f3763]">Heading 3</span><span class="mb-2 border-b-2 border-[#2b6cd6] font-['Liberation_Sans',sans-serif] text-[26px] leading-6 text-[#2b6cd6]"><b>¶</b>a</span></button>
      </div>
    </div>
    <div class="flex items-center pt-[23px]">
      <label for="list" class="w-[68px] pt-[2px] text-[25px]">List:</label>
      <div class="relative h-[46px] flex-1">
        <select id="list" class="size-full appearance-none rounded-[6px] border-2 border-[#b5b5b5] bg-linear-to-b from-[#f6f6f6] to-[#e6e6e6] pt-[2px] pl-[6px] text-[20px] text-black"><option>In current document</option></select>
        <svg class="pointer-events-none absolute top-3 right-[7px]" width="10" height="24" viewBox="0 0 10 24"><path d="M5 0l5 8H0zM0 16h10l-5 8z" fill="#444"/></svg>
      </div>
    </div>
    <label class="flex items-center gap-2 pt-[28px] leading-[36px]"><input type="checkbox" class="size-7 appearance-none rounded-[6px] border-2 border-[#b9b9b9] bg-white">Show styles guides</label>
    <label class="flex items-center gap-2 pt-1 leading-[36px]"><input type="checkbox" class="size-7 appearance-none rounded-[6px] border-2 border-[#b9b9b9] bg-white">Show direct formatting guides</label>
  </aside>
</main>

<!-- Status bar -->
<footer class="flex h-[46px] shrink-0 items-center border-t-2 border-[#989898] bg-linear-to-b from-[#dcdcdc] to-[#c5c5c5] pl-12 text-[24px] text-[#484848]">
  <span class="w-[167px]">Page 1 of 2</span>
  <span class="w-[157px]">377 words</span>
  <button aria-label="Proofing" class="mr-[45px]"><svg width="32" height="26" viewBox="0 0 32 26" fill="none" stroke="#555" stroke-width="2"><path d="M26 2h-7l-6 2-6-2H1v20h6l6 3 6-3h7v-2M13 4v20M20 8l10 12M30 8L20 20"/></svg></button>
  <span>English (United States)</span>
  <div class="ml-auto flex h-full items-center">
    <button aria-label="Print layout" class="flex h-full w-[74px] items-center justify-center bg-[#919191]"><svg width="28" height="26" viewBox="0 0 28 26"><rect x="1" y="1" width="26" height="24" rx="1" fill="none" stroke="#fff" stroke-width="2"/><path d="M4 5h20M4 9h20M4 13h20M4 17h20M4 21h20" stroke="#fff" stroke-width="2"/></svg></button>
    <button aria-label="Web layout" class="ml-[19px]"><svg width="32" height="28" viewBox="0 0 32 28"><path d="M12 21H1V1h22v8M4 6h16M4 10h12M4 14h10M4 18h8" fill="none" stroke="#555" stroke-width="2"/><circle cx="23" cy="19" r="9" fill="#4d4d4d"/><path d="M18 14l4-1 1 3-3 4-3-3zM24 18l4 1-3 5-2-3z" fill="#d0d0d0"/></svg></button>
    <button aria-label="Outline" class="ml-10"><svg width="31" height="20" viewBox="0 0 31 20"><path d="M0 1h4M8 1h14M9 7h3M17 7h13M9 13h3M17 13h13M4 19h4M12 19h14" stroke="#555" stroke-width="2"/></svg></button>
    <button aria-label="Draft" class="ml-[41px]"><svg width="28" height="20" viewBox="0 0 28 20"><path d="M0 1h28M0 7h22M0 13h26M0 19h22" stroke="#555" stroke-width="2"/></svg></button>
    <button aria-label="Zoom out" class="ml-[38px] h-1 w-4 rounded-sm bg-[#555]"></button>
    <input aria-label="Zoom" type="range" value="57" class="ml-4 h-2 w-[196px] appearance-none rounded-full bg-[#8a8a8a] [&::-webkit-slider-thumb]:size-[23px] [&::-webkit-slider-thumb]:appearance-none [&::-webkit-slider-thumb]:rounded-full [&::-webkit-slider-thumb]:bg-white [&::-webkit-slider-thumb]:shadow-[0_0_2px_#777]">
    <button aria-label="Zoom in" class="ml-4"><svg width="16" height="16" viewBox="0 0 16 16"><path d="M8 0v16M0 8h16" stroke="#555" stroke-width="4"/></svg></button>
    <span class="ml-9 w-[109px]">160%</span>
  </div>
</footer>

<!-- System notification -->
<div role="alert" class="absolute top-[14px] right-0 z-20 flex h-[130px] w-[676px] overflow-hidden rounded-l-[12px] border-2 border-r-0 border-[#1c2438] bg-linear-to-b from-[#2d3854] to-[#44465a] text-white shadow-[0_8px_20px_rgba(0,0,0,0.35),inset_0_2px_0_#49546e]">
  <svg class="mt-[34px] ml-[22px] shrink-0" width="56" height="56" viewBox="0 0 56 56"><circle cx="28" cy="28" r="27" fill="#1d2021" stroke="#8e9798" stroke-width="2"/><circle cx="28" cy="28" r="21" fill="none" stroke="#d2d4d0" stroke-width="4" stroke-dasharray="2.200 2.200"/><circle cx="28" cy="28" r="17" fill="#3a3c3c" stroke="#b9bab6" stroke-width="4"/><path d="M28 28h17M28 28l-8-15M28 28l-8 15" stroke="#bfc0bb" stroke-width="4"/><circle cx="28" cy="28" r="4" fill="#d5d6d2"/></svg>
  <div class="ml-[22px] flex-1 pt-[14px]">
    <p class="text-[24px] leading-8 font-semibold">Updates Not Installed</p>
    <p class="pt-[2px] text-[22px] leading-7 font-medium">Some updates could not be installed<br>automatically.</p>
  </div>
  <div class="flex w-[130px] flex-col border-l-2 border-[#5a647e] text-[23px] font-medium text-[#b3bad8]">
    <button class="flex-1 border-b-2 border-[#5a647e] pt-[2px] pl-3">Details</button>
    <button class="flex-1 pt-[2px] pl-3">Install</button>
  </div>
</div>
</div>

<script>
// Show a formatting dot in every space of the document body
const walker = document.createTreeWalker(document.getElementById('doc'), NodeFilter.SHOW_TEXT);
const nodes = [];
while (walker.nextNode()) nodes.push(walker.currentNode);
for (const n of nodes) {
  if (n.nodeValue.includes('\n')) continue;
  const f = document.createDocumentFragment();
  n.nodeValue.split(/( )/).forEach(part => {
    if (part === ' ') {
      const s = document.createElement('span');
      s.className = 'bg-[radial-gradient(circle_at_75%_50%,#3b99fc_2px,transparent_3px)] whitespace-pre';
      s.textContent = ' ';
      f.append(s);
    } else if (part) f.append(part);
  });
  n.replaceWith(f);
}
</script>
</body>
</html>
